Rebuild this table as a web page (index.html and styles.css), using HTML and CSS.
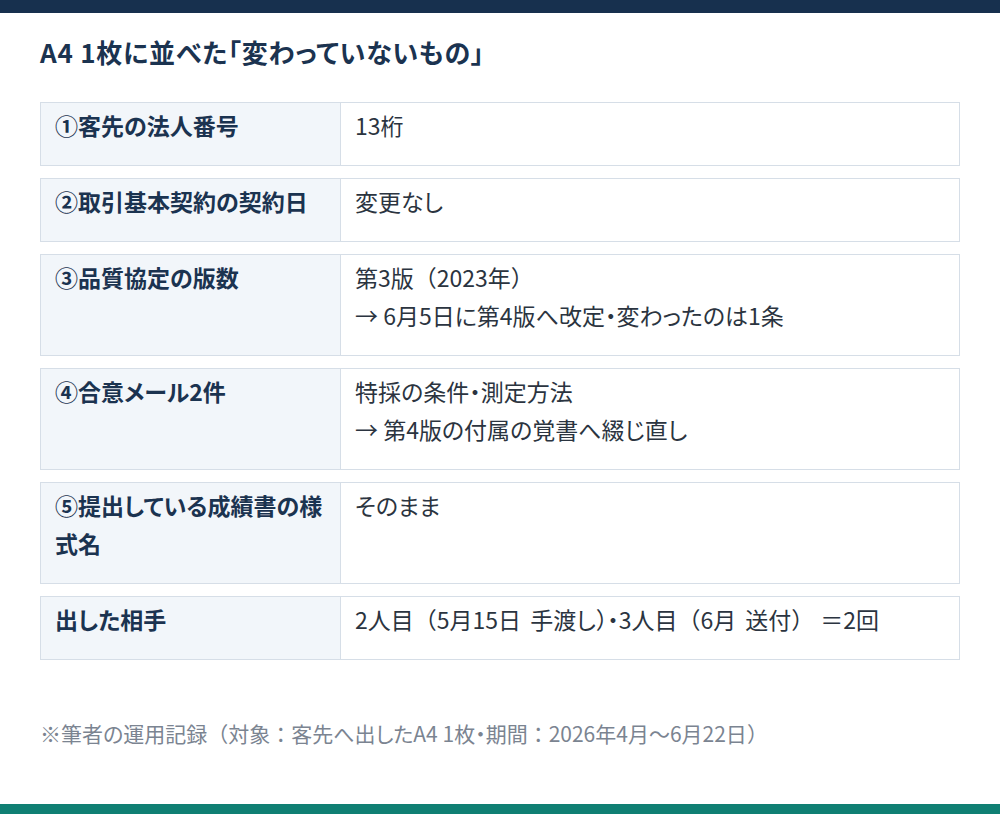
FILE: index.html
```html
<!DOCTYPE html>
<html lang="ja">
<head>
<meta charset="utf-8">
<title>A4 1枚に並べた「変わっていないもの」</title>
<link rel="stylesheet" href="styles.css">
</head>
<body>
<div class="page">
  <div class="topbar"></div>
  <main class="main">
    <h1 class="title">A4 1枚に並べた「変わっていないもの」</h1>
    <div class="list">
      <div class="row">
        <div class="key">①客先の法人番号</div>
        <div class="val">13桁</div>
      </div>
      <div class="row">
        <div class="key">②取引基本契約の契約日</div>
        <div class="val">変更なし</div>
      </div>
      <div class="row">
        <div class="key">③品質協定の版数</div>
        <div class="val">第3版<span class="fw">（</span>2023年<span class="fw">）</span><br>→ 6月5日に第4版へ改定・変わったのは1条</div>
      </div>
      <div class="row">
        <div class="key">④合意メール2件</div>
        <div class="val">特採の条件・測定方法<br>→ 第4版の付属の覚書へ綴じ直し</div>
      </div>
      <div class="row">
        <div class="key">⑤提出している成績書の様式名</div>
        <div class="val">そのまま</div>
      </div>
      <div class="row">
        <div class="key">出した相手</div>
        <div class="val wide">2人目<span class="fw">（</span>5月15日 手渡し<span class="fw">）</span>・3人目<span class="fw">（</span>6月 送付<span class="fw">）</span><span class="fw eq">＝</span>2回</div>
      </div>
    </div>
    <p class="note">※筆者の運用記録<span class="fw">（</span>対象<span class="fw">：</span>客先へ出したA4 1枚・期間<span class="fw">：</span>2026年4月〜6月22日<span class="fw">）</span></p>
  </main>
  <div class="bottombar"></div>
</div>
</body>
</html>
```

FILE: styles.css
```css
html, body {
  margin: 0;
  padding: 0;
  background: #ffffff;
}
body {
  font-family: "Noto Sans CJK JP", "Noto Sans", sans-serif;
  font-feature-settings: "palt";
  color: #2b3440;
}
.fw {
  font-feature-settings: normal;
}
.page {
  min-height: 100vh;
  display: flex;
  flex-direction: column;
}
.topbar {
  height: 13px;
  background: #17304e;
}
.main {
  padding: 0 40px;
  flex: 1;
}
.title {
  margin: 21px 0 0;
  font-size: 26px;
  line-height: 36px;
  font-weight: 700;
  letter-spacing: 0.03em;
  color: #1b3350;
}
.list {
  margin-top: 32px;
  display: flex;
  flex-direction: column;
  gap: 12px;
}
.row {
  display: grid;
  grid-template-columns: 300px 1fr;
  border: 1px solid #d6dee7;
}
.key {
  background: #f2f6fa;
  border-right: 1px solid #d6dee7;
  padding: 3px 10px 21px 14px;
  font-size: 23px;
  line-height: 38px;
  font-weight: 700;
  color: #1b3350;
}
.val {
  padding: 3px 14px 21px 14px;
  font-size: 23px;
  line-height: 38px;
  color: #2b3440;
}
.wide {
  word-spacing: 4px;
}
.eq {
  margin-left: 6px;
}
.note {
  margin: 58px 0 0;
  font-size: 21px;
  line-height: 30px;
  color: #7b8491;
}
.bottombar {
  height: 10px;
  background: #0f7f73;
}
```
